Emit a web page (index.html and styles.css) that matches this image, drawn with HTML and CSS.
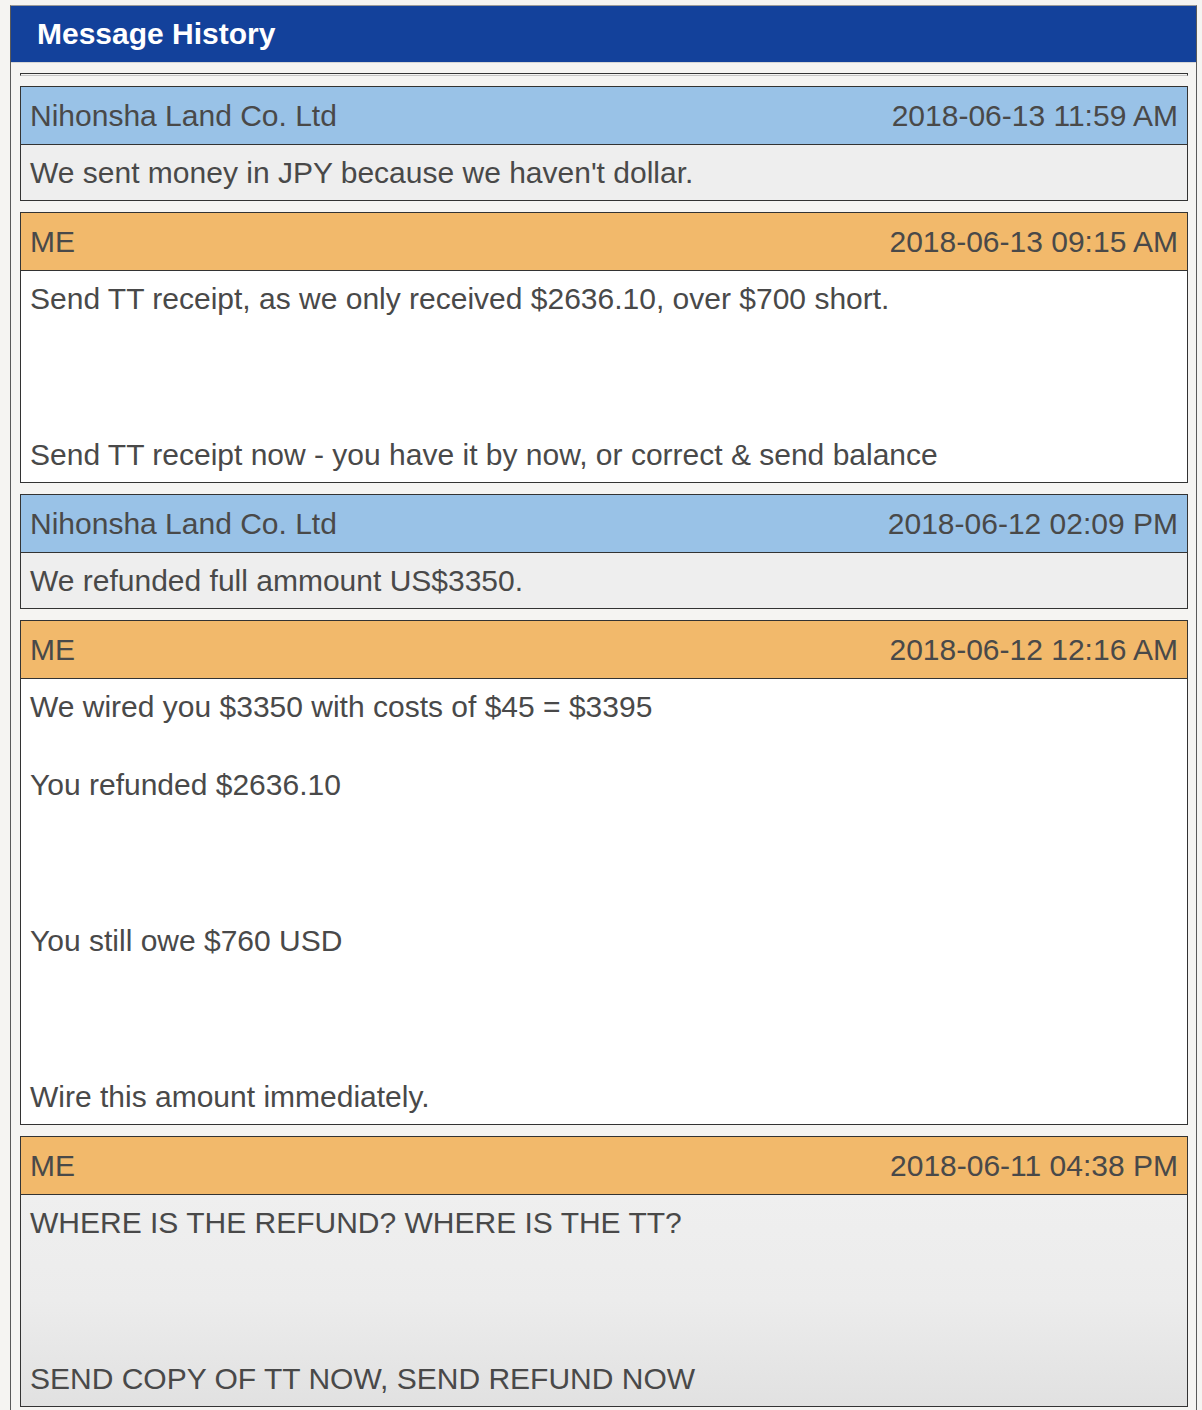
FILE: index.html
```html
<!DOCTYPE html>
<html lang="en">
<head>
<meta charset="utf-8">
<title>Message History</title>
<link rel="stylesheet" href="styles.css">
</head>
<body>
<div class="panel">
  <div class="panel-head">Message History</div>
  <div class="panel-body">
    <div class="divider"></div>
    <div class="msg msg-them">
      <div class="msg-head"><span class="msg-from">Nihonsha Land Co. Ltd</span><span class="msg-date">2018-06-13 11:59 AM</span></div>
      <div class="msg-text">We sent money in JPY because we haven't dollar.</div>
    </div>
    <div class="msg msg-me">
      <div class="msg-head"><span class="msg-from">ME</span><span class="msg-date">2018-06-13 09:15 AM</span></div>
      <div class="msg-text">Send TT receipt, as we only received $2636.10, over $700 short.<br><br><br><br>Send TT receipt now - you have it by now, or correct &amp; send balance</div>
    </div>
    <div class="msg msg-them">
      <div class="msg-head"><span class="msg-from">Nihonsha Land Co. Ltd</span><span class="msg-date">2018-06-12 02:09 PM</span></div>
      <div class="msg-text">We refunded full ammount US$3350.</div>
    </div>
    <div class="msg msg-me">
      <div class="msg-head"><span class="msg-from">ME</span><span class="msg-date">2018-06-12 12:16 AM</span></div>
      <div class="msg-text">We wired you $3350 with costs of $45 = $3395<br><br>You refunded $2636.10<br><br><br><br>You still owe $760 USD<br><br><br><br>Wire this amount immediately.</div>
    </div>
    <div class="msg msg-me msg-alt">
      <div class="msg-head"><span class="msg-from">ME</span><span class="msg-date">2018-06-11 04:38 PM</span></div>
      <div class="msg-text">WHERE IS THE REFUND? WHERE IS THE TT?<br><br><br><br>SEND COPY OF TT NOW, SEND REFUND NOW</div>
    </div>
  </div>
</div>
</body>
</html>
```

FILE: styles.css
```css
html, body {
  margin: 0;
  padding: 0;
  background: #f5f4f2;
}

body {
  font-family: "Liberation Sans", Arial, Helvetica, sans-serif;
  color: #494949;
}

.panel {
  margin: 5px 5px 0 10px;
  border: 1px solid #5a5a5a;
  border-top-color: #9a9a9a;
  background: #f5f4f2;
}

.panel-head {
  height: 56px;
  line-height: 56px;
  padding-left: 26px;
  background: #13419b;
  color: #ffffff;
  font-weight: bold;
  font-size: 30px;
  border-bottom: 1px solid #d6d6d6;
}

.panel-body {
  padding: 10px 8px 12px 9px;
}

.divider {
  height: 1px;
  margin: 0 0 10px 0;
  border: 1px solid #333333;
  border-bottom-color: #c4c4c4;
}

.msg {
  border: 1px solid #333333;
  margin-bottom: 11px;
  font-size: 30px;
  line-height: 39px;
}

.msg-head {
  display: flex;
  justify-content: space-between;
  align-items: center;
  padding: 9px 9px 9px 9px;
  border-bottom: 1px solid #333333;
}

.msg-them .msg-head {
  background: #99c2e7;
}

.msg-me .msg-head {
  background: #f2b96b;
}

.msg-text {
  padding: 8px 9px;
}

.msg-them .msg-text {
  background: #eeeeee;
}

.msg-me .msg-text {
  background: #ffffff;
}

.msg-me.msg-alt .msg-text {
  background: linear-gradient(#efefef 0%, #ececec 50%, #e1e1e1 100%);
}
```
